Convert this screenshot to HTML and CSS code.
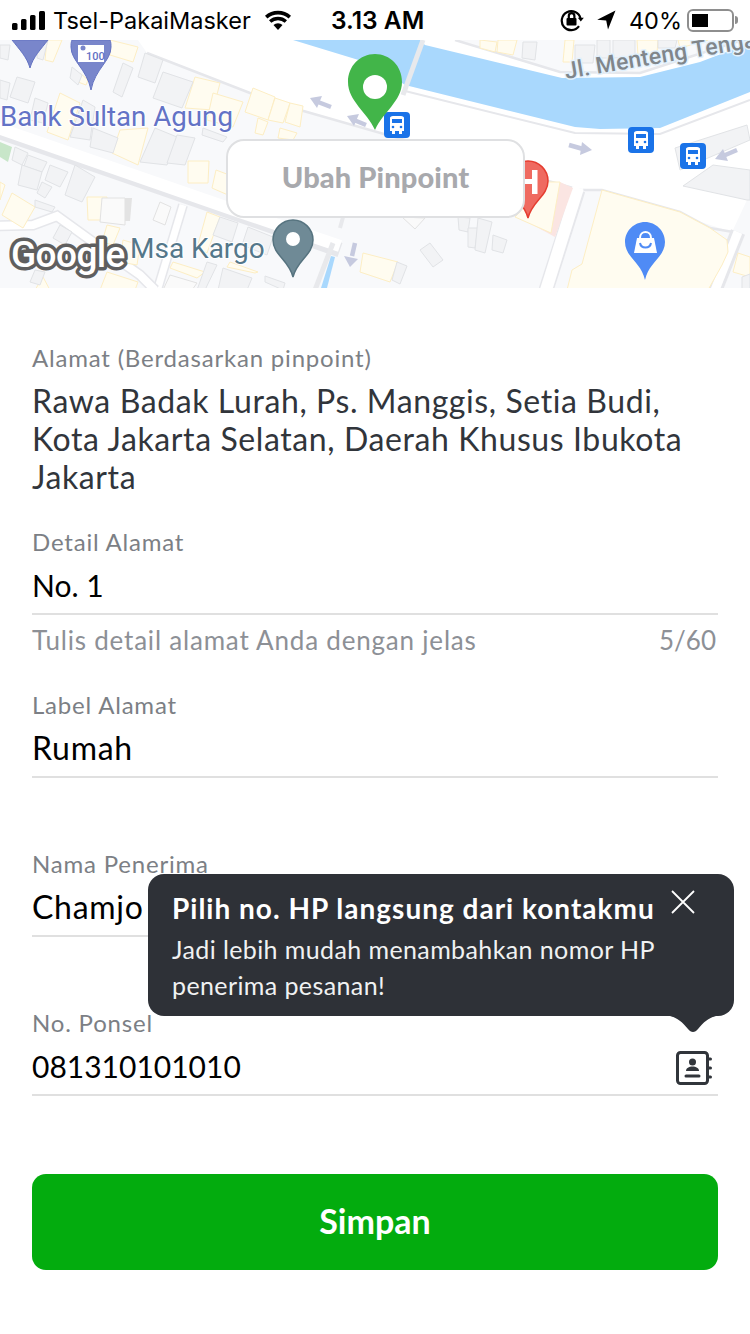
FILE: index.html
```html
<!DOCTYPE html>
<html lang="id">
<head>
<meta charset="utf-8">
<title>Ubah Alamat</title>
<link rel="stylesheet" href="styles.css">
</head>
<body>
<div class="page">
  <header class="status">
    <div class="status-left">
      <svg class="ic-signal" width="34" height="20" viewBox="0 0 34 20"><rect x="0" y="13" width="5.500" height="7" rx="1.500"/><rect x="9" y="9" width="5.500" height="11" rx="1.500"/><rect x="18" y="5" width="5.500" height="15" rx="1.500"/><rect x="27" y="1" width="6" height="19" rx="1.500"/></svg>
      <span class="carrier">Tsel-PakaiMasker</span>
      <svg class="ic-wifi" width="28" height="20" viewBox="0 0 28 20"><path d="M14 20l-4.500-5a6.500 6.500 0 0 1 9 0z"/><path d="M7.300 12.800l-2.300-2.600a13.500 13.500 0 0 1 18 0l-2.300 2.600a10 10 0 0 0-13.400 0z"/><path d="M3.400 8.400L1 5.800a19.500 19.500 0 0 1 26 0l-2.400 2.600a16 16 0 0 0-21.200 0z"/></svg>
    </div>
    <div class="clock">3.13 AM</div>
    <div class="status-right">
      <svg class="ic-lock" width="24" height="24" viewBox="0 0 24 24"><path class="line" d="M20.500 10.500A9.500 9.500 0 1 0 19 18.200"/><path d="M17.800 9.800h6l-3 3.700z"/><rect x="6.500" y="10" width="10" height="7.500" rx="1"/><path class="line" d="M8.800 10V8a2.800 2.800 0 0 1 5.600 0v2"/></svg>
      <svg class="ic-loc" width="19" height="20" viewBox="0 0 19 20"><path d="M18.500 0.500L11 19.500l-1.800-9-9-.8z"/></svg>
      <span class="pct">40%</span>
      <div class="battery"><div class="battery-fill"></div></div>
      <div class="battery-nub"></div>
    </div>
  </header>

  <section class="map">
    <svg class="map-svg" width="750" height="248" viewBox="0 40 750 248">
      <rect class="m-ground" x="0" y="40" width="750" height="248"/>
      <!-- main white carriageway with its grey lower edge -->
      <path class="m-white" d="M138 40H750V172L683 186 747 200 732 232 602 190 573 188 300 110 250 93 147 53z"/>
      <path class="m-edge" d="M147 53L250 93 300 110 573 188M583 190H602L680 212 710 228 733 232"/>
      <!-- band of buildings north of the river -->
      <path class="m-ground" d="M455 40L560 72 640 72 750 40z"/>
      <path class="m-edge" d="M455 40L560 72 640 73 742 40"/>
      <!-- side roads -->
      <path class="m-edge w15" d="M-5 130L240 215 340 250"/>
      <path class="m-road w12" d="M-5 127L240 212 340 246"/>
      <path class="m-edge w10" d="M183 205L158 288"/>
      <path class="m-road w7" d="M183 205L158 288"/>
      <path class="m-edge w11" d="M-5 226L33 225 57 216 93 242 140 275 155 290"/>
      <path class="m-road w8" d="M-5 226L33 225 57 216 93 242 140 275 155 290"/>
      <path class="m-edge w15" d="M578 190L546 290"/>
      <path class="m-road w12" d="M578 188L546 290"/>
      <path class="m-edge w15" d="M738 232L715 290"/>
      <path class="m-road w9" d="M738 232L715 290"/>
      <path class="m-strip" d="M333 243L315 290"/>
      <path class="m-strip thin" d="M345 210L340 228"/>
      <!-- river -->
      <path class="m-river" d="M293 40L375 65 405 85 575 127 600 129 660 128 750 92V43L700 62 640 77 562 78 425 45 420 40z"/>
      <path class="m-edge thin" d="M405 91L575 133 660 134 750 100"/>
      <path class="m-strip" d="M423 40L403 95"/>
      <path class="m-canal" d="M321 288l10-32 4 1-8 31z"/>
      <!-- buildings -->
      <g class="m-yellow">
        <polygon points="480,40 497,42 495,52 480,48"/><polygon points="498,40 517,40 513,55 497,52"/>
        <polygon points="565,40 574,40 572,62 563,62"/><polygon points="637,40 658,40 657,53 638,55"/><polygon points="678,40 708,40 680,48"/>
        <polygon points="47,40 62,40 53,62 45,60"/><polygon points="110,40 138,47 133,62 110,55"/>
        <polygon points="80,73 88,80 86,85 78,82"/><polygon points="60,93 80,103 68,140 47,132"/>
        <polygon points="120,130 148,128 138,165 112,153"/><polygon points="195,77 220,83 213,110 185,108"/>
        <polygon points="213,93 243,102 233,127 207,120"/><polygon points="253,88 275,97 268,120 245,112"/>
        <polygon points="275,98 290,103 283,123 268,120"/><polygon points="290,103 303,106 300,127 285,122"/>
        <polygon points="258,118 268,122 263,135 255,133"/><polygon points="280,128 297,133 293,140 278,138"/>
        <polygon points="188,161 209,161 208,183 188,183"/><polygon points="216,170 232,176 228,195 212,188"/>
        <polygon points="12,193 35,207 23,228 2,215"/><polygon points="0,182 5,185 0,200"/>
        <polygon points="87,197 107,197 106,220 88,220"/><polygon points="107,225 120,228 113,245 102,242"/>
        <polygon points="123,240 140,245 137,265 120,262"/><polygon points="207,212 220,217 207,253 197,248"/>
        <polygon points="173,262 205,272 197,278 170,268"/><polygon points="230,262 258,272 255,273 227,267"/>
        <polygon points="107,272 138,282 135,290 100,290"/><polygon points="43,277 50,290 35,290"/>
        <polygon points="363,253 398,262 390,282 360,272"/>
        <polygon points="738,253 750,257 750,277 733,272"/>
      </g>
      <path class="m-pink" d="M518 217L555 237 573 188 560 182z"/>
      <g class="m-yellow">
        <polygon points="548,182 560,182 551,233 515,217"/>
        <polygon points="567,290 572,270 582,264 602,190 680,212 710,228 727,240 728,252 722,265 708,290"/>
      </g>
      <g class="m-building">
        <polygon points="523,42 537,42 535,60 522,58"/><polygon points="575,45 595,45 593,63 575,63"/>
        <polygon points="597,40 610,40 610,58 597,58"/><polygon points="613,40 635,40 635,57 613,58"/>
        <polygon points="658,40 677,40 675,48 658,48"/>
        <polygon points="0,45 10,45 8,60 0,58"/><polygon points="38,40 48,40 43,60 37,58"/>
        <polygon points="17,77 35,82 28,103 10,97"/><polygon points="0,80 10,83 7,100 0,98"/>
        <polygon points="35,98 48,103 43,123 30,120"/><polygon points="83,100 95,107 90,140 70,137"/>
        <polygon points="93,128 118,138 113,153 90,147"/><polygon points="155,128 177,137 167,165 140,162"/>
        <polygon points="177,135 195,138 185,165 167,163"/><polygon points="123,63 133,68 122,97 113,92"/>
        <polygon points="145,53 163,60 155,83 138,77"/><polygon points="163,72 193,82 182,108 153,98"/>
        <polygon points="203,128 227,137 223,142 202,135"/><polygon points="72,67 82,75 78,85 70,78"/>
        <polygon points="15,147 28,153 22,165 12,160"/><polygon points="28,155 47,162 42,172 24,166"/>
        <polygon points="22,165 42,172 37,190 18,185"/><polygon points="50,165 68,172 60,187 45,180"/>
        <polygon points="42,182 52,187 45,198 37,193"/><polygon points="75,165 95,177 82,202 65,195"/>
        <polygon points="35,200 55,207 52,212 35,207"/><polygon points="60,225 72,232 65,245 53,238"/>
        <polygon points="220,217 238,223 232,242 213,235"/><polygon points="248,227 273,237 267,255 242,245"/>
        <polygon points="207,262 217,265 205,290 197,290"/><polygon points="223,268 252,278 247,290 218,290"/>
        <polygon points="265,276 285,283 283,290 265,282"/><polygon points="35,270 45,272 40,285 30,282"/>
        <polygon points="397,262 407,266 400,284 392,280"/><polygon points="420,250 430,243 443,260 433,267"/>
        <polygon points="458,217 470,218 468,232 459,230"/><polygon points="468,228 478,228 475,248 468,247"/>
        <polygon points="478,218 492,222 485,253 475,250"/><polygon points="493,235 507,240 503,253 492,250"/>
        <polygon points="683,186 713,165 750,170 750,200 747,200"/>
        <polygon points="675,148 747,125 750,140 680,170"/><polygon points="742,277 750,274 750,290 742,290"/>
      </g>
      <g class="m-pale">
        <polygon points="102,198 125,198 125,225 100,222"/>
        <polygon points="160,202 171,207 165,225 153,220"/>
        <polygon points="170,275 197,283 192,290 163,290"/>
        <polygon points="402,217 425,218 415,229"/>
      </g>
      <path class="m-green" d="M0 142L12 147 8 162 0 157z"/>
      <path class="m-shadow" d="M125 198h7l-2 23h-5z"/>
      <!-- one-way arrows -->
      <g class="m-arrow">
        <path d="M331 107L318 102"/><path d="M366 125L354 120"/><path d="M569 145L583 149"/><path d="M737 150L723 156"/><path d="M355 243L352 256"/>
      </g>
      <g class="m-arrow-head">
        <polygon points="310,98 322,96 317,108"/><polygon points="347,116 359,114 354,126"/>
        <polygon points="592,150 582,142 580,155"/><polygon points="715,159 723,149 728,161"/>
        <polygon points="350,267 344,256 358,259"/>
      </g>
      <!-- place pins -->
      <path class="p-purple" d="M12 40h36c-7 9-15 17-18 28-3-11-11-19-18-28z"/>
      <path class="p-purple" d="M72 40h38c1 2 1 5 1 7 0 14-16 22-20 43-4-21-20-29-20-43 0-2 0-5 1-7z"/>
      <rect class="p-white" x="78" y="45" width="26" height="17"/>
      <circle class="p-fill-purple" cx="83" cy="48" r="2.500"/>
      <text class="t-100" x="86" y="60">100</text>
      <path class="p-grey" d="M293 220c-11 0-20 9-20 20 0 15 16 20 20 37 4-17 20-22 20-37 0-11-9-20-20-20z"/>
      <circle class="p-white" cx="293" cy="239" r="7"/>
      <path class="p-red" d="M528 161c-11 0-20 9-20 20 0 15 16 20 20 37 4-17 20-22 20-37 0-11-9-20-20-20z"/>
      <rect class="p-white" x="532" y="170" width="5.500" height="24"/><rect class="p-white" x="524" y="179" width="10" height="5"/>
      <path class="p-blue" d="M645 222c-11 0-20 9-20 20 0 15 16 20 20 38 4-18 20-23 20-38 0-11-9-20-20-20z"/>
      <path class="p-white" d="M634 253l3-15h17l3 15z"/>
      <path class="p-white-line" d="M640 239v-1c0-8 11-8 11 0v1"/>
      <path class="p-blue-line" d="M640 243c1 6 10 6 11 0"/>
      <!-- bus stops -->
      <g class="bus"><rect x="384" y="112" width="26" height="26" rx="4"/><path class="bus-w" d="M390 118c0-1 1-2 3-2h8c2 0 3 1 3 2v13h-2v3h-3v-3h-4v3h-3v-3h-2z"/><rect class="bus-b" x="392" y="119" width="10" height="4"/><circle class="bus-b" cx="393" cy="127" r="1.300"/><circle class="bus-b" cx="401" cy="127" r="1.300"/></g>
      <g class="bus"><rect x="628" y="127" width="26" height="26" rx="4"/><path class="bus-w" d="M634 133c0-1 1-2 3-2h8c2 0 3 1 3 2v13h-2v3h-3v-3h-4v3h-3v-3h-2z"/><rect class="bus-b" x="636" y="134" width="10" height="4"/><circle class="bus-b" cx="637" cy="142" r="1.300"/><circle class="bus-b" cx="645" cy="142" r="1.300"/></g>
      <g class="bus"><rect x="680" y="143" width="26" height="26" rx="4"/><path class="bus-w" d="M686 149c0-1 1-2 3-2h8c2 0 3 1 3 2v13h-2v3h-3v-3h-4v3h-3v-3h-2z"/><rect class="bus-b" x="688" y="150" width="10" height="4"/><circle class="bus-b" cx="689" cy="158" r="1.300"/><circle class="bus-b" cx="697" cy="158" r="1.300"/></g>
      <!-- labels -->
      <text class="t-bank" x="0" y="126">Bank Sultan Agung</text>
      <text class="t-msa" x="130" y="258">Msa Kargo</text>
      <text class="t-road" transform="translate(566 79) rotate(-9.500)">Jl. Menteng Tengah</text>
      <text class="t-google" x="11" y="267">Google</text>
      <!-- green pin -->
      <path class="p-green" d="M375 54c-15 0-27 12-27 28 0 19 19 30 27 48 8-18 27-29 27-48 0-16-12-28-27-28z"/>
      <circle class="p-white" cx="375" cy="87" r="12"/>
    </svg>
    <button class="change-pin" type="button">Ubah Pinpoint</button>
  </section>

  <main class="form">
    <div class="label">Alamat (Berdasarkan pinpoint)</div>
    <div class="address">Rawa Badak Lurah, Ps. Manggis, Setia Budi, Kota Jakarta Selatan, Daerah Khusus Ibukota Jakarta</div>

    <div class="field field-first">
      <div class="label">Detail Alamat</div>
      <div class="value value-num">No. 1</div>
    </div>
    <div class="helper"><span>Tulis detail alamat Anda dengan jelas</span><span class="count">5/60</span></div>

    <div class="field field-after-helper">
      <div class="label">Label Alamat</div>
      <div class="value">Rumah</div>
    </div>
    <div class="field">
      <div class="label">Nama Penerima</div>
      <div class="value">Chamjo</div>
    </div>
    <div class="field">
      <div class="label">No. Ponsel</div>
      <div class="value value-num value-row">
        <span>081310101010</span>
        <svg class="ic-book" width="36" height="34" viewBox="0 0 36 34"><rect x="1.500" y="1.500" width="30" height="31" rx="3"/><circle class="solid" cx="16.500" cy="11" r="3.500"/><path class="solid" d="M10 20c0-3 3-4.500 6.500-4.500S23 17 23 20z"/><path d="M10 25h13M31.500 8h3M31.500 17h3M31.500 26h3"/></svg>
      </div>
    </div>
    <button class="save" type="button">Simpan</button>
  </main>

  <aside class="tip">
    <div class="tip-title">Pilih no. HP langsung dari kontakmu</div>
    <div class="tip-body">Jadi lebih mudah menambahkan nomor HP penerima pesanan!</div>
    <svg class="tip-close" width="26" height="26" viewBox="0 0 26 26"><path d="M2 2l22 22M24 2L2 24"/></svg>
    <svg class="tip-arrow" width="46" height="17" viewBox="0 0 46 17"><path d="M0 0h46c-8 2-12 6-18 13-3 4-7 4-10 0C12 6 8 2 0 0z"/></svg>
  </aside>
</div>
</body>
</html>
```
FILE: styles.css
```css
* { box-sizing: border-box; }
html, body { margin: 0; padding: 0; background: #fff; }
.page { position: relative; width: 750px; height: 1334px; overflow: hidden; font-family: Lato, "Noto Sans", sans-serif; }

/* status bar */
.status { height: 40px; display: flex; align-items: center; position: relative; padding: 0 12px 0 12px; font-family: Inter, "Liberation Sans", sans-serif; font-size: 23.500px; color: #000; justify-content: space-between; }
.status-left, .status-right { display: flex; align-items: center; }
.carrier { margin-left: 7px; }
.ic-wifi { margin-left: 13px; }
.clock { position: absolute; left: 331px; font-weight: 600; font-size: 24.500px; }
.ic-lock { margin-right: 13px; }
.ic-lock .line { fill: none; stroke: #000; stroke-width: 2.200; }
.ic-loc { margin-right: 13px; }
.pct { margin-right: 5px; }
.battery { width: 47px; height: 23px; border: 2px solid #8e8e8e; border-radius: 6px; padding: 3px; }
.battery-fill { width: 16px; height: 13px; background: #000; }
.battery-nub { width: 3px; height: 8px; margin-left: 1px; background: #8e8e8e; border-radius: 0 3px 3px 0; }

/* map */
.map { position: relative; height: 248px; overflow: hidden; }
.map-svg { display: block; font-family: Roboto, sans-serif; }
.m-ground { fill: #f8f9fb; }
.m-white { fill: #fff; }
.m-road { fill: none; stroke: #fff; }
.w7 { stroke-width: 7; }
.w8 { stroke-width: 8; }
.w9 { stroke-width: 9; }
.w12 { stroke-width: 12; }
.m-edge { fill: none; stroke: #e6e7eb; stroke-width: 2.500; }
.m-edge.thin { stroke-width: 2; }
.m-edge.w10 { stroke-width: 10; }
.m-edge.w11 { stroke-width: 11; }
.m-edge.w15 { stroke-width: 15; }
.m-strip { fill: none; stroke: #e8e9ec; stroke-width: 5; }
.m-strip.thin { stroke-width: 4; }
.m-river, .m-canal { fill: #a9d8fd; }
.m-yellow polygon { fill: #fffcf0; stroke: #fdeec4; stroke-width: 1; }
.m-building polygon { fill: #f2f3f5; stroke: #e1e3e6; stroke-width: 1; }
.m-pale polygon { fill: #fafafa; stroke: #e2e2e2; stroke-width: 1; }
.m-green { fill: #c8e6c9; }
.m-shadow { fill: #e3e3e3; }
.m-pink { fill: #fbe5e2; }
.m-arrow path { stroke: #c6cadf; stroke-width: 4.500; fill: none; }
.m-arrow-head polygon { fill: #c6cadf; }
.p-purple, .p-fill-purple { fill: #7986cb; }
.p-purple { stroke: #6473c2; stroke-width: 1; }
.p-white { fill: #fff; }
.p-grey { fill: #6f8a96; stroke: #56737f; stroke-width: 1.500; }
.p-red { fill: #ef6a60; stroke: #e53d30; stroke-width: 1.500; }
.p-blue { fill: #4f8bf5; }
.p-blue-line { fill: none; stroke: #4f8bf5; stroke-width: 2; }
.p-white-line { fill: none; stroke: #fff; stroke-width: 2; }
.p-green { fill: #42b549; }
.bus > rect:first-child { fill: #1a73e8; }
.bus-w { fill: #fff; }
.bus-b { fill: #1a73e8; }
.t-100 { font-size: 11px; fill: #5f6fc4; font-weight: 500; }
.t-bank, .t-msa, .t-road, .t-google { paint-order: stroke; stroke: #fff; stroke-linejoin: round; }
.t-bank { font-size: 27.700px; fill: #6373c6; stroke-width: 2px; }
.t-msa { font-size: 28px; fill: #54778a; stroke-width: 2px; }
.t-road { font-size: 23px; fill: #80868b; stroke: #e2f1fd; stroke-width: 3px; font-weight: 500; letter-spacing: 0.2px; }
.t-google { font-size: 37px; font-weight: 500; fill: #fff; stroke: #5f5f5f; stroke-width: 7px; letter-spacing: -0.6px; }

.change-pin { position: absolute; left: 226px; top: 99px; width: 299px; height: 79px; background: #fff; border: 2px solid #dfe0e2; border-radius: 18px; font-family: inherit; font-size: 29px; font-weight: 900; color: #a8a9ad; padding: 0 0 4px; letter-spacing: 0.1px; }

/* form */
.form { padding: 55px 32px 0; }
.label { font-size: 24px; line-height: 30px; color: #7c7f85; letter-spacing: 0.8px; }
.address { font-size: 32px; line-height: 38px; color: #31353b; margin-top: 9px; letter-spacing: 0.6px; }
.field { margin-top: 71px; border-bottom: 2px solid #e0e0e0; }
.field-first { margin-top: 31px; }
.field-after-helper { margin-top: 35px; }
.value { font-size: 32px; line-height: 48px; height: 56px; padding-top: 4px; color: #000; letter-spacing: 0.7px; }
.value-num { font-size: 30px; letter-spacing: 0; }
.value-row { display: flex; justify-content: space-between; align-items: flex-start; }
.helper { display: flex; justify-content: space-between; font-size: 26px; line-height: 30px; color: #8d9096; margin-top: 10px; padding-right: 2px; letter-spacing: 0.8px; }
.count { letter-spacing: 0; }
.ic-book { fill: none; stroke: #31353b; stroke-width: 3; stroke-linecap: round; margin: 9px 6px 0 0; }
.ic-book .solid { fill: #31353b; stroke: none; }
.save { display: block; width: 686px; height: 96px; margin-top: 78px; background: #03ac0e; border: 0; border-radius: 14px; color: #fff; font-family: inherit; font-size: 34px; font-weight: 700; padding: 0 0 4px; }

/* tooltip */
.tip { position: absolute; left: 148px; top: 874px; width: 586px; height: 142px; background: #2e3137; border-radius: 16px; color: #fff; padding: 17px 24px; }
.tip-title { font-size: 28px; line-height: 34px; font-weight: 700; letter-spacing: 1px; white-space: nowrap; }
.tip-body { font-size: 25px; line-height: 36px; margin-top: 6px; width: 500px; color: #f0f1f2; letter-spacing: 0.4px; }
.tip-close { position: absolute; right: 38px; top: 15px; fill: none; stroke: #fff; stroke-width: 1.800; }
.tip-arrow { position: absolute; left: 522px; top: 142px; fill: #2e3137; }
```
